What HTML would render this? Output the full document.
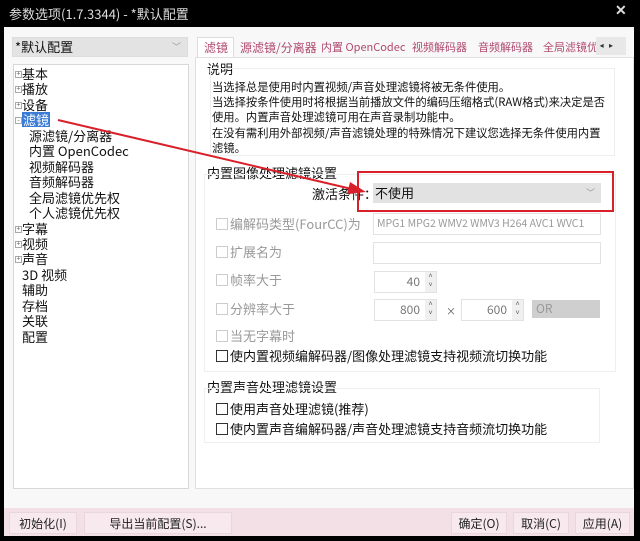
<!DOCTYPE html>
<html><head><meta charset="utf-8"><style>
*{margin:0;padding:0;box-sizing:border-box}
body{width:640px;height:541px;background:#000;position:relative;overflow:hidden;font-family:"Noto Sans CJK SC","Liberation Sans",sans-serif;font-size:12px;line-height:15px;color:#111}
.a{position:absolute;white-space:nowrap}
.cb{position:absolute;width:12px;height:12px;border:1px solid #333;background:#fff}
.cbd{border-color:#ccc}
.dis{color:#999}
.fld{position:absolute;background:#fff;border:1px solid #e2e2e2}
.spin{position:absolute;width:11px;background:#f0f0f0;font-size:7px;color:#555;text-align:center;line-height:9px}
.btn{position:absolute;background:#f7e9ee;border:1px solid #ead6dd;text-align:center;line-height:21px;font-size:12px;color:#222;top:512px;height:22px}
.tr{position:absolute;left:22px;font-size:13px;line-height:15px}
.pl{position:absolute;left:15px;width:7px;height:7px;border:1px solid #aaa;font-size:7px;line-height:5px;text-align:center;color:#666}
.tab{position:absolute;top:40px;color:#b04a70;font-size:12px;white-space:nowrap}
</style></head><body>
<div class="a" style="left:9px;top:5px;color:#ddd;font-size:13px;line-height:17px">参数选项(1.7.3344) - *默认配置</div>
<div class="a" style="left:615px;top:3px;color:#ddd;font-size:14px;font-weight:bold">✕</div>
<div class="a" style="left:4px;top:27px;width:630px;height:481px;background:#f8f8f8"></div>
<div class="a" style="left:4px;top:508px;width:630px;height:28px;background:#f3e0e7"></div>
<div class="a" style="left:12px;top:37px;width:176px;height:20px;background:#e3e3e3;border:1px solid #ddd;font-size:13px;line-height:18px;padding-left:2px">*默认配置<span style="position:absolute;right:6px;color:#999;font-size:9px">﹀</span></div>
<div class="a" style="left:13px;top:64px;width:176px;height:425px;background:#fff;border:1px solid #d8d8d8"></div>
<div class="pl" style="top:71px">+</div><div class="tr" style="top:66px">基本</div>
<div class="pl" style="top:86px">+</div><div class="tr" style="top:81px">播放</div>
<div class="pl" style="top:102px">+</div><div class="tr" style="top:97px">设备</div>
<div class="pl" style="top:117px">-</div><div class="tr" style="top:112px;background:#3a7bd5;color:#fff;padding:0 1px">滤镜</div>
<div class="tr" style="left:29px;top:128px">源滤镜/分离器</div>
<div class="tr" style="left:29px;top:143px">内置 OpenCodec</div>
<div class="tr" style="left:29px;top:159px">视频解码器</div>
<div class="tr" style="left:29px;top:174px">音频解码器</div>
<div class="tr" style="left:29px;top:190px">全局滤镜优先权</div>
<div class="tr" style="left:29px;top:205px">个人滤镜优先权</div>
<div class="pl" style="top:226px">+</div><div class="tr" style="top:221px">字幕</div>
<div class="pl" style="top:241px">+</div><div class="tr" style="top:236px">视频</div>
<div class="pl" style="top:256px">+</div><div class="tr" style="top:251px">声音</div>
<div class="tr" style="top:267px">3D 视频</div>
<div class="tr" style="top:282px">辅助</div>
<div class="tr" style="top:298px">存档</div>
<div class="tr" style="top:313px">关联</div>
<div class="tr" style="top:329px">配置</div>
<div class="a" style="left:197px;top:37px;width:37px;height:21px;background:#fff;border:1px solid #ddd;border-bottom:none"></div>
<div class="tab" style="left:204px">滤镜</div>
<div class="tab" style="left:240px">源滤镜/分离器</div>
<div class="tab" style="left:321px;font-size:11px">内置 OpenCodec</div>
<div class="tab" style="left:412px;font-size:11px">视频解码器</div>
<div class="tab" style="left:478px;font-size:11px">音频解码器</div>
<div class="tab" style="left:543px;width:53px;overflow:hidden;font-size:11px">全局滤镜优先权</div>
<div class="a" style="left:596px;top:37px;width:30px;height:18px;background:#e8e8e8;font-size:8px;line-height:18px;color:#333">&nbsp;&nbsp;◂ &nbsp;&nbsp;▸</div>
<div class="a" style="left:195px;top:57px;width:439px;height:432px;background:#fff;border:1px solid #e0e0e0"></div>
<div class="a" style="left:207px;top:61px;font-size:13px">说明</div>
<div class="a" style="left:210px;top:68px;width:405px;height:88px;border:1px solid #eee"></div>
<div class="a" style="left:212px;top:80px;font-size:11.3px;line-height:15.2px">当选择总是使用时内置视频/声音处理滤镜将被无条件使用。<br>当选择按条件使用时将根据当前播放文件的编码压缩格式(RAW格式)来决定是否<br>使用。内置声音处理滤镜可用在声音录制功能中。<br>在没有需利用外部视频/声音滤镜处理的特殊情况下建议您选择无条件使用内置<br>滤镜。</div>
<div class="a" style="left:207px;top:165px;font-size:13px">内置图像处理滤镜设置</div>
<div class="a" style="left:204px;top:174px;width:412px;height:198px;border:1px solid #eee"></div>
<div class="a" style="left:312px;top:186px;font-size:13px">激活条件：</div>
<div class="a" style="left:373px;top:183px;width:228px;height:20px;background:#e2e2e2;font-size:13px;line-height:20px;padding-left:2px">不使用<span style="position:absolute;right:6px;color:#999;font-size:9px">﹀</span></div>
<div class="a" style="left:357px;top:171px;width:257px;height:41px;border:2px solid #d9202a"></div>
<div class="cb cbd" style="left:216px;top:218px"></div><div class="a dis" style="left:230px;top:216px;font-size:13px">编解码类型(FourCC)为</div>
<div class="fld" style="left:373px;top:213px;width:228px;height:22px;color:#999;font-size:10.5px;line-height:20px;padding-left:3px;overflow:hidden">MPG1 MPG2 WMV2 WMV3 H264 AVC1 WVC1</div>
<div class="cb cbd" style="left:216px;top:246px"></div><div class="a dis" style="left:230px;top:244px;font-size:13px">扩展名为</div>
<div class="fld" style="left:373px;top:242px;width:228px;height:22px"></div>
<div class="cb cbd" style="left:216px;top:274px"></div><div class="a dis" style="left:230px;top:272px;font-size:13px">帧率大于</div>
<div class="fld" style="left:374px;top:271px;width:63px;height:22px;text-align:right;padding-right:16px;color:#777;line-height:20px">40</div><div class="spin" style="left:425px;top:272px;height:20px">˄<br>˅</div>
<div class="cb cbd" style="left:216px;top:303px"></div><div class="a dis" style="left:230px;top:301px;font-size:13px">分辨率大于</div>
<div class="fld" style="left:374px;top:299px;width:63px;height:22px;text-align:right;padding-right:16px;color:#777;line-height:20px">800</div><div class="spin" style="left:425px;top:300px;height:20px">˄<br>˅</div>
<div class="a" style="left:446px;top:303px;font-size:10px;color:#555">×</div>
<div class="fld" style="left:461px;top:299px;width:63px;height:22px;text-align:right;padding-right:16px;color:#777;line-height:20px">600</div><div class="spin" style="left:512px;top:300px;height:20px">˄<br>˅</div>
<div class="a" style="left:532px;top:300px;width:68px;height:18px;background:#cfcfcf;color:#999;padding-left:4px;line-height:18px">OR</div>
<div class="cb cbd" style="left:216px;top:330px"></div><div class="a dis" style="left:230px;top:328px;font-size:13px">当无字幕时</div>
<div class="cb" style="left:216px;top:350px"></div><div class="a" style="left:230px;top:348px;font-size:13px">使内置视频编解码器/图像处理滤镜支持视频流切换功能</div>
<div class="a" style="left:207px;top:379px;font-size:13px">内置声音处理滤镜设置</div>
<div class="a" style="left:204px;top:388px;width:396px;height:55px;border:1px solid #eee"></div>
<div class="cb" style="left:216px;top:403px"></div><div class="a" style="left:230px;top:401px;font-size:13px">使用声音处理滤镜(推荐)</div>
<div class="cb" style="left:216px;top:423px"></div><div class="a" style="left:230px;top:421px;font-size:13px">使内置声音编解码器/声音处理滤镜支持音频流切换功能</div>
<div class="btn" style="left:9px;width:68px">初始化(I)</div>
<div class="btn" style="left:84px;width:148px">导出当前配置(S)...</div>
<div class="btn" style="left:451px;width:56px">确定(O)</div>
<div class="btn" style="left:513px;width:56px">取消(C)</div>
<div class="btn" style="left:575px;width:55px">应用(A)</div>
<svg class="a" style="left:0;top:0" width="640" height="541"><line x1="58" y1="120" x2="356" y2="190" stroke="#d9202a" stroke-width="2"/><polygon points="366,192 350,182 347,194" fill="#d9202a"/></svg>
</body></html>
